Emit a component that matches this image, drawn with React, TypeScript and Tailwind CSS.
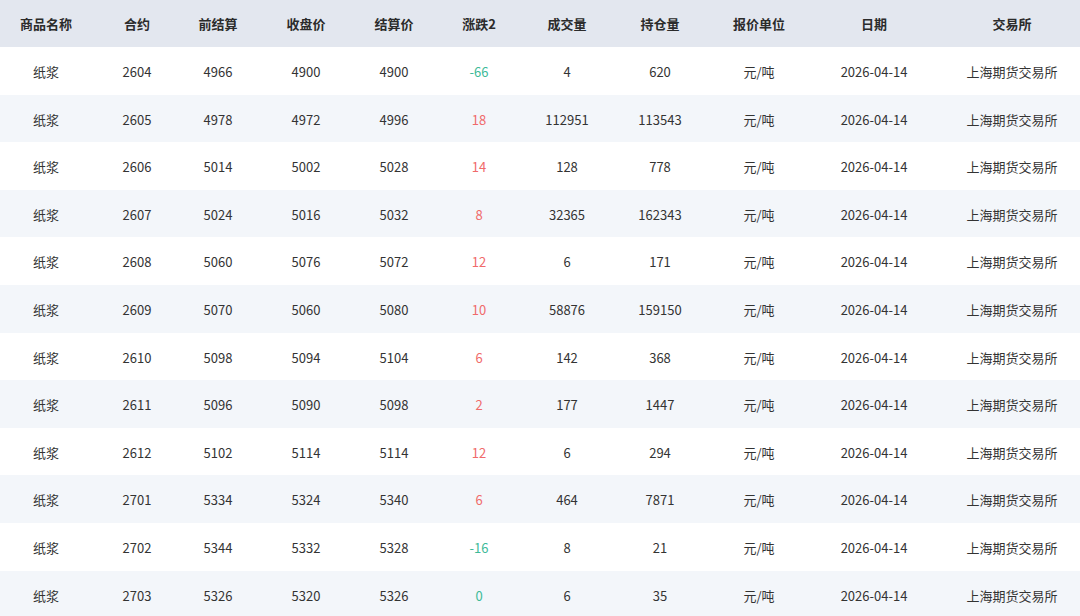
const columns = [
  { label: "商品名称", width: "w-[92px]" },
  { label: "合约", width: "w-[90px]" },
  { label: "前结算", width: "w-[72px]" },
  { label: "收盘价", width: "w-[104px]" },
  { label: "结算价", width: "w-[72px]" },
  { label: "涨跌2", width: "w-[98px]" },
  { label: "成交量", width: "w-[78px]" },
  { label: "持仓量", width: "w-[108px]" },
  { label: "报价单位", width: "w-[90px]" },
  { label: "日期", width: "w-[140px]" },
  { label: "交易所", width: "w-[136px]" },
];

// contract, prev settle, close, settle, change, volume, open interest
const rows: [string, number, number, number, number, number, number][] = [
  ["2604", 4966, 4900, 4900, -66, 4, 620],
  ["2605", 4978, 4972, 4996, 18, 112951, 113543],
  ["2606", 5014, 5002, 5028, 14, 128, 778],
  ["2607", 5024, 5016, 5032, 8, 32365, 162343],
  ["2608", 5060, 5076, 5072, 12, 6, 171],
  ["2609", 5070, 5060, 5080, 10, 58876, 159150],
  ["2610", 5098, 5094, 5104, 6, 142, 368],
  ["2611", 5096, 5090, 5098, 2, 177, 1447],
  ["2612", 5102, 5114, 5114, 12, 6, 294],
  ["2701", 5334, 5324, 5340, 6, 464, 7871],
  ["2702", 5344, 5332, 5328, -16, 8, 21],
  ["2703", 5326, 5320, 5326, 0, 6, 35],
];

const changeColor = (v: number) =>
  v > 0 ? "text-[#f06a6a]" : "text-[#3dba98]";

export default function App() {
  return (
    <div className="w-[1080px] h-[616px] overflow-hidden bg-white font-['Noto_Sans_CJK_SC','Noto_Sans',sans-serif] text-[13px] text-[#333]">
      <table className="w-[1080px] table-fixed border-collapse">
        <colgroup>
          {columns.map((c) => (
            <col key={c.label} className={c.width} />
          ))}
        </colgroup>
        <thead>
          <tr className="h-[47px] bg-[#e3e7ef]">
            {columns.map((c) => (
              <th key={c.label} className="p-0 text-center font-bold text-[#2b2b2b]">
                {c.label}
              </th>
            ))}
          </tr>
        </thead>
        <tbody>
          {rows.map(([code, pre, close, settle, chg, vol, oi], i) => (
            <tr
              key={code}
              className={`h-[47.6px] ${i % 2 === 1 ? "bg-[#f3f6fa]" : "bg-white"}`}
            >
              <td className="p-0 pt-[2px] text-center">纸浆</td>
              <td className="p-0 pt-[2px] text-center">{code}</td>
              <td className="p-0 pt-[2px] text-center">{pre}</td>
              <td className="p-0 pt-[2px] text-center">{close}</td>
              <td className="p-0 pt-[2px] text-center">{settle}</td>
              <td className={`p-0 pt-[2px] text-center ${changeColor(chg)}`}>{chg}</td>
              <td className="p-0 pt-[2px] text-center">{vol}</td>
              <td className="p-0 pt-[2px] text-center">{oi}</td>
              <td className="p-0 pt-[2px] text-center">元/吨</td>
              <td className="p-0 pt-[2px] text-center">2026-04-14</td>
              <td className="p-0 pt-[2px] text-center">上海期货交易所</td>
            </tr>
          ))}
        </tbody>
      </table>
    </div>
  );
}
